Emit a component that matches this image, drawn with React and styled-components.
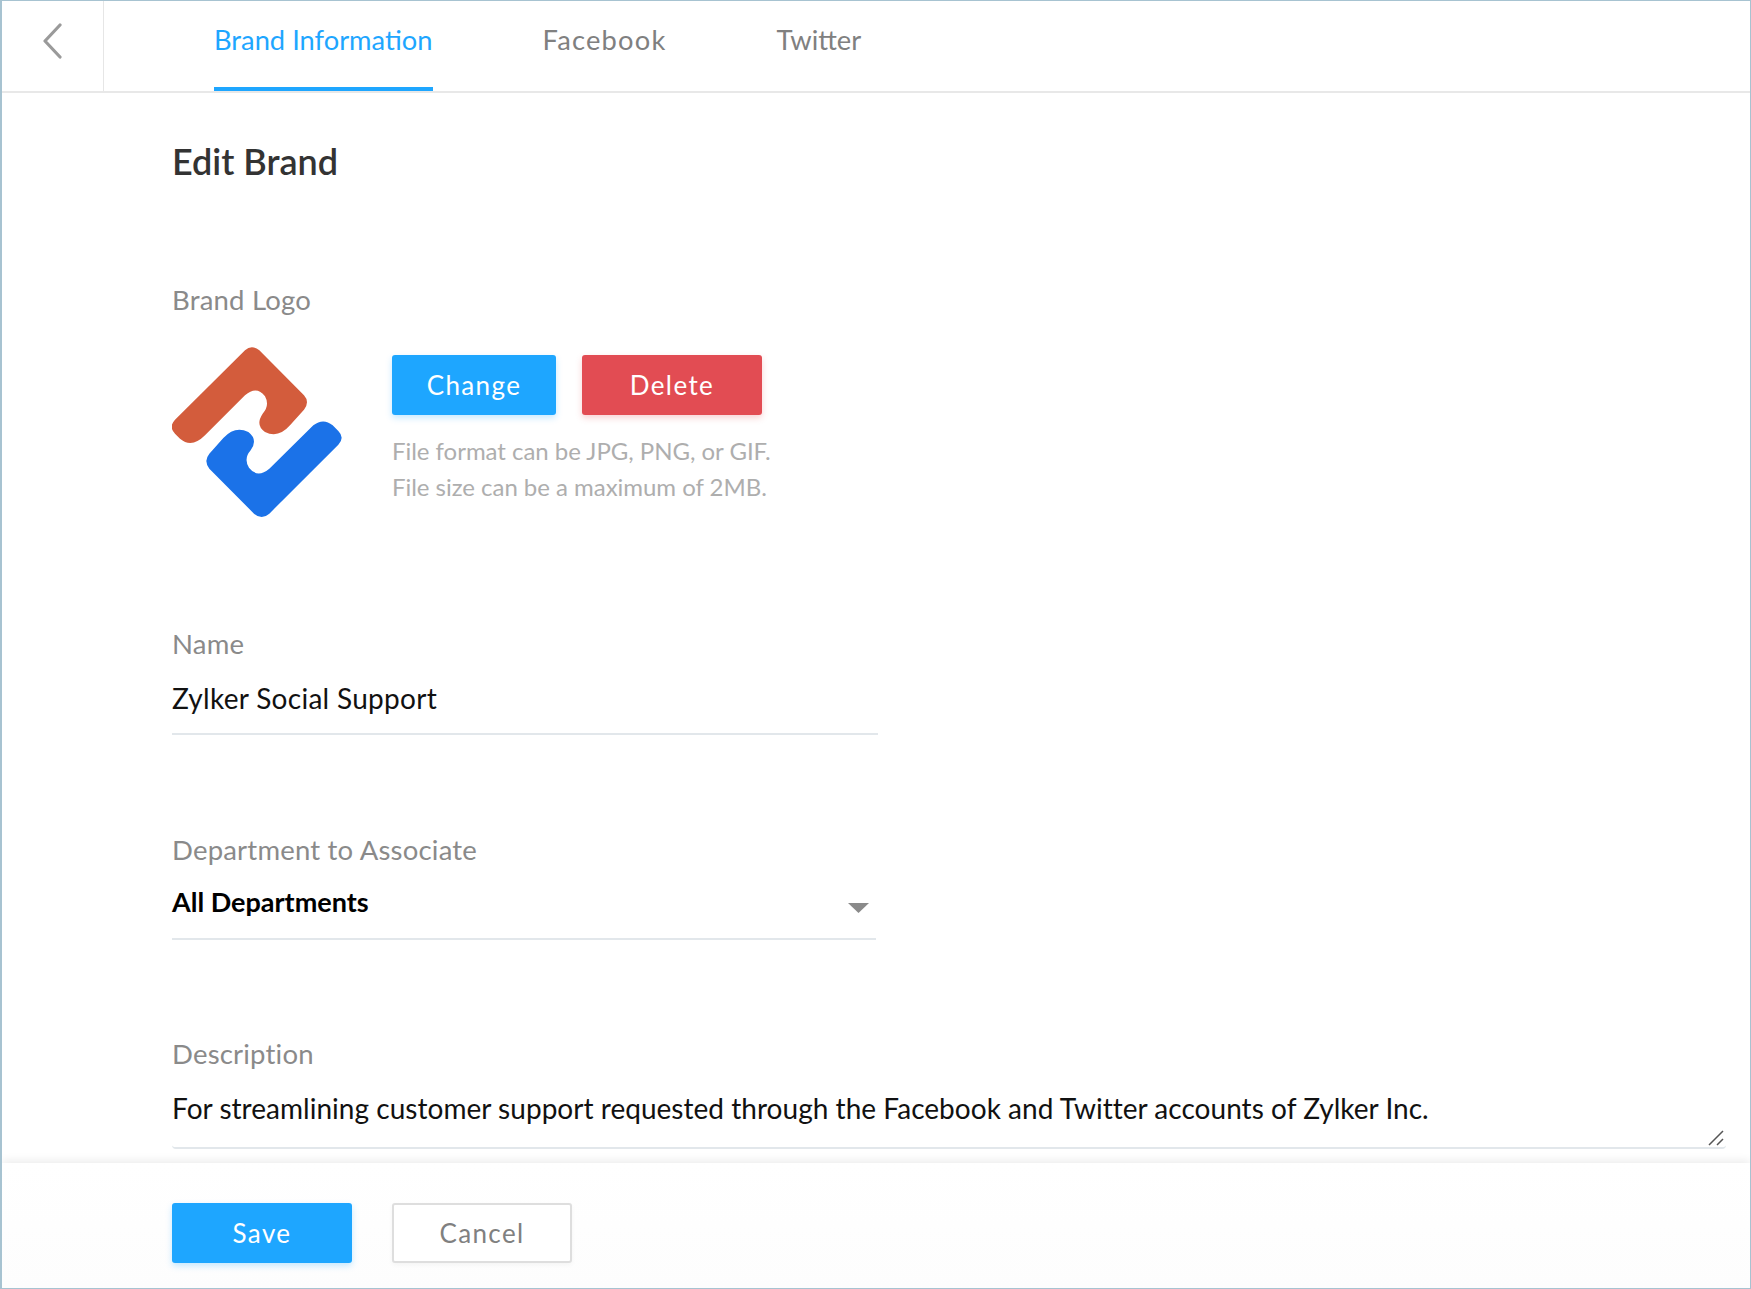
import React from "react";
import styled, { createGlobalStyle } from "styled-components";

const Global = createGlobalStyle`
  html, body { margin: 0; padding: 0; background: #fff; }
  body { font-family: Lato, "Open Sans", sans-serif; }
`;

const Frame = styled.div`
  box-sizing: border-box;
  width: 1751px;
  height: 1289px;
  border: 1px solid #a7c3d1;
  border-left-width: 2px;
  display: flex;
  flex-direction: column;
  overflow: hidden;
  background: #fff;
`;

const Header = styled.header`
  flex: none;
  box-sizing: border-box;
  height: 92px;
  display: flex;
  border-bottom: 2px solid #e8e8e8;
`;

const BackCell = styled.div`
  box-sizing: border-box;
  width: 102px;
  display: flex;
  align-items: center;
  padding: 0 0 10px 40px;
  border-right: 1px solid #e6e6e6;
`;

const Tabs = styled.nav`
  display: flex;
  gap: 110px;
  padding-left: 110px;
`;

const Tab = styled.div`
  box-sizing: border-box;
  height: 90px;
  padding-top: 21px;
  font-size: 27.3px;
  line-height: 36px;
  letter-spacing: ${(p) => p.$track || 0}px;
  color: ${(p) => (p.$active ? "#1ea6ff" : "#808080")};
  border-bottom: 4px solid ${(p) => (p.$active ? "#1ea6ff" : "transparent")};
`;

const Main = styled.main`
  flex: 1;
  min-height: 0;
  padding: 46px 0 0 170px;
  overflow: hidden;
`;

const Title = styled.h1`
  margin: 0;
  font-size: 36px;
  line-height: 44px;
  font-weight: 600;
  color: #333;
`;

const Label = styled.div`
  font-size: 27.5px;
  line-height: 34px;
  letter-spacing: 0.2px;
  color: #8a8a8a;
`;

const LogoLabel = styled(Label)`
  margin-top: 100px;
`;

const LogoRow = styled.div`
  display: flex;
  align-items: flex-start;
  margin-top: 30px;
`;

const LogoMark = styled.svg`
  flex: none;
  display: block;
  width: 170px;
  height: 170px;
`;

const LogoSide = styled.div`
  margin-left: 50px;
  padding-top: 8px;
`;

const ButtonRow = styled.div`
  display: flex;
  gap: 26px;
`;

const Button = styled.button`
  box-sizing: border-box;
  width: ${(p) => p.$w}px;
  height: 60px;
  padding: 0;
  border-radius: 3px;
  font-family: inherit;
  font-size: 26px;
  letter-spacing: 1.4px;
  color: ${(p) => (p.$kind === "ghost" ? "#808080" : "#fff")};
  background: ${(p) =>
    p.$kind === "danger" ? "#e24c53" : p.$kind === "ghost" ? "#fff" : "#1ea6ff"};
  border: ${(p) => (p.$kind === "ghost" ? "2px solid #dedede" : "none")};
  box-shadow: ${(p) =>
    p.$kind === "danger"
      ? "0 3px 6px rgba(226,76,83,.25)"
      : p.$kind === "ghost"
      ? "0 2px 5px rgba(0,0,0,.04)"
      : "0 3px 6px rgba(30,166,255,.25)"};
`;

const Hint = styled.div`
  margin-top: 18px;
  font-size: 24px;
  line-height: 36px;
  letter-spacing: -0.03px;
  color: #aeaeae;
`;

const Field = styled.div`
  width: ${(p) => p.$w}px;
  margin-top: ${(p) => p.$top}px;
`;

const Value = styled.div`
  box-sizing: border-box;
  height: ${(p) => p.$h}px;
  padding-top: ${(p) => p.$pad}px;
  border-bottom: 2px solid #e2e7eb;
  font-size: 28px;
  line-height: 36px;
  letter-spacing: ${(p) => p.$track || 0}px;
  color: #111;
`;

const SelectValue = styled(Value)`
  display: flex;
  justify-content: space-between;
  align-items: flex-start;
  font-size: 27px;
  font-weight: 700;
  color: #000;
`;

const Caret = styled.svg`
  width: 21px;
  height: 10px;
  margin: 19px 7px 0 0;
`;

const TextareaValue = styled(Value)`
  position: relative;
  border-radius: 0 0 4px 4px;
`;

const Grip = styled.svg`
  position: absolute;
  right: 2px;
  bottom: 1px;
  width: 16px;
  height: 16px;
`;

const Footer = styled.footer`
  flex: none;
  box-sizing: border-box;
  height: 125px;
  padding: 40px 0 0 170px;
  display: flex;
  gap: 40px;
  background: linear-gradient(#fff, #fdfdfd);
  box-shadow: 0 -3px 8px rgba(0, 0, 0, 0.07);
  position: relative;
`;

export default function App() {
  return (
    <Frame>
      <Global />
      <Header>
        <BackCell>
          <svg width="20" height="36" viewBox="0 0 20 36" fill="none">
            <path d="M18 2 3 18l15 16" stroke="#9a9a9a" strokeWidth="3.2" strokeLinecap="round" strokeLinejoin="round" />
          </svg>
        </BackCell>
        <Tabs>
          <Tab $active>Brand Information</Tab>
          <Tab $track={1.2}>Facebook</Tab>
          <Tab>Twitter</Tab>
        </Tabs>
      </Header>
      <Main>
        <Title>Edit Brand</Title>
        <LogoLabel>Brand Logo</LogoLabel>
        <LogoRow>
          <LogoMark viewBox="66 50 510 510">
            <path fill="#d35c3c" d="M285 60Q305 42 328 60L462 195Q480 215 462 238L420 285Q385 325 345 305Q315 285 338 250Q360 225 345 198Q320 165 285 195L165 315Q125 355 90 325L75 310Q55 290 75 268Z" />
            <path fill="#1b72e8" d="M490 285Q520 262 548 285L565 302Q585 322 565 343L358 550Q335 570 312 550L178 415Q160 392 178 370L220 323Q255 285 295 305Q325 328 302 360Q280 385 297 412Q322 445 358 415Z" />
          </LogoMark>
          <LogoSide>
            <ButtonRow>
              <Button $w={164}>Change</Button>
              <Button $w={180} $kind="danger">Delete</Button>
            </ButtonRow>
            <Hint>
              File format can be JPG, PNG, or GIF.
              <br />
              File size can be a maximum of 2MB.
            </Hint>
          </LogoSide>
        </LogoRow>
        <Field $w={706} $top={110}>
          <Label>Name</Label>
          <Value $h={74} $pad={19} $track={0.3}>Zylker Social Support</Value>
        </Field>
        <Field $w={704} $top={98}>
          <Label>Department to Associate</Label>
          <SelectValue $h={73} $pad={17}>
            All Departments
            <Caret viewBox="0 0 21 10"><path d="M0 0h21L10.5 10z" fill="#8a8a8a" /></Caret>
          </SelectValue>
        </Field>
        <Field $w={1554} $top={97}>
          <Label>Description</Label>
          <TextareaValue $h={78} $pad={19} $track={0.03}>
            For streamlining customer support requested through the Facebook and Twitter accounts of Zylker Inc.
            <Grip viewBox="0 0 16 16" fill="none" stroke="#555" strokeWidth="1.5">
              <path d="M1 15 15 1M9 15l6-6" />
            </Grip>
          </TextareaValue>
        </Field>
      </Main>
      <Footer>
        <Button $w={180}>Save</Button>
        <Button $w={180} $kind="ghost">Cancel</Button>
      </Footer>
    </Frame>
  );
}
